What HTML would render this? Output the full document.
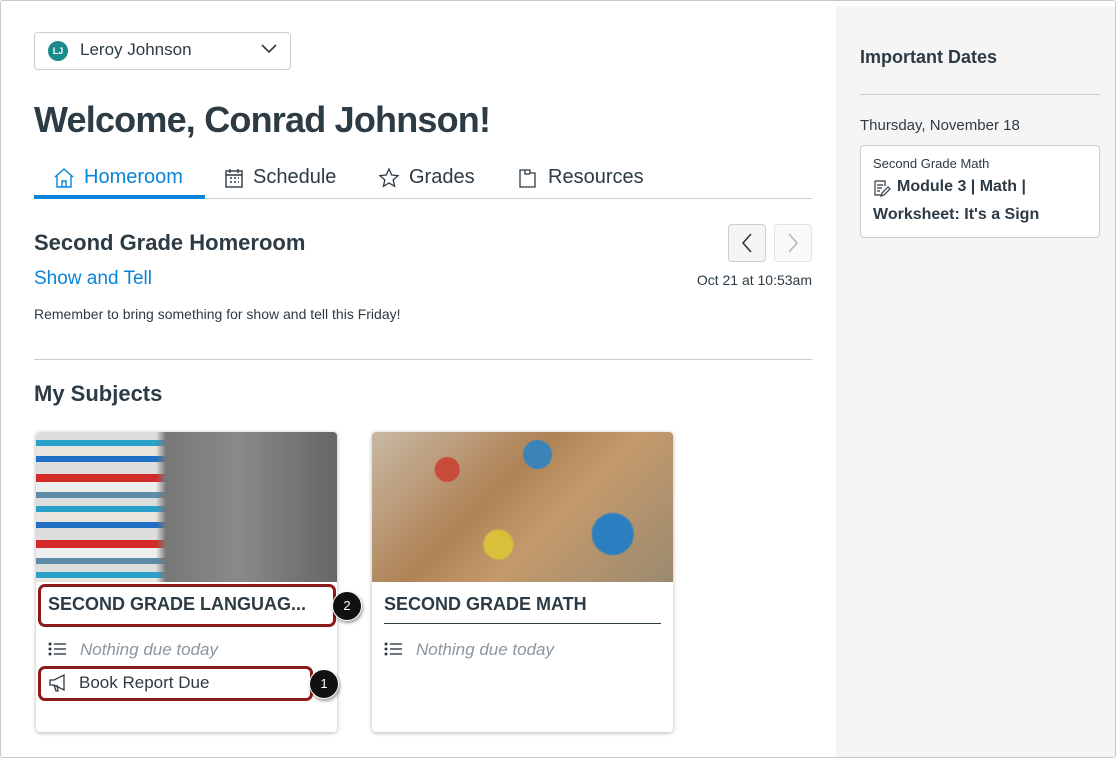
<!DOCTYPE html>
<html><head><style>
*{box-sizing:border-box;margin:0;padding:0}
body{width:1116px;height:758px;overflow:hidden;background:#fff;font-family:"Liberation Sans",sans-serif;color:#2d3b45;position:relative}
.frame{position:absolute;inset:0;border:1px solid #c8c8c8;border-radius:3px;pointer-events:none}
.side{position:absolute;left:836px;top:6px;width:279px;height:751px;background:#f5f5f5}
.abs{position:absolute}
.tab{position:absolute;top:166px;font-size:20px;display:flex;align-items:center;gap:9px}
.card{position:absolute;top:432px;width:301px;height:300px;background:#fff;border-radius:4px;box-shadow:0 1px 4px rgba(0,0,0,.3);overflow:hidden}
.badge{position:absolute;width:30px;height:30px;border-radius:50%;background:#111;color:#fff;font-size:13px;text-align:center;line-height:28px;box-shadow:1px 2px 3px rgba(0,0,0,.4);border:1px solid #fff}
.hl{position:absolute;border:3px solid #8b1a1a;border-radius:7px}
</style></head><body>
<div class="side"></div>
<div class="abs" style="left:34px;top:32px;width:257px;height:38px;border:1px solid #c7cdd1;border-radius:4px"></div>
<div class="abs" style="left:48px;top:41px;width:20px;height:20px;border-radius:50%;background:#1a8a8c;color:#fff;font-size:9px;font-weight:bold;text-align:center;line-height:20px">LJ</div>
<div class="abs" style="left:80px;top:40px;font-size:17px">Leroy Johnson</div>
<svg class="abs" style="left:261px;top:44px" width="16" height="10"><path d="M1 1l7 7 7-7" stroke="#2d3b45" stroke-width="1.6" fill="none"/></svg>
<div class="abs" style="left:34px;top:99px;font-size:36px;font-weight:bold;letter-spacing:-0.8px">Welcome, Conrad Johnson!</div>
<div class="abs" style="left:34px;top:198px;width:778px;height:1px;background:#c7cdd1"></div>
<div class="abs" style="left:34px;top:195px;width:171px;height:4px;background:#0a84d8"></div>
<div class="tab" style="left:53px;color:#0a84d8"><svg width="22" height="22" viewBox="0 0 22 22" fill="none" stroke="#0a84d8" stroke-width="1.4"><path d="M2 10L11 2l9 8M4 8v12h14V8M9 20v-6h4v6"/></svg>Homeroom</div>
<div class="tab" style="left:224px"><svg width="20" height="20" viewBox="0 0 20 20" fill="none" stroke="#2d3b45" stroke-width="1.4"><rect x="2" y="3" width="16" height="16"/><path d="M2 7h16M6 1v4M14 1v4M6 10h2M10 10h2M14 10h1M6 14h2M10 14h2M14 14h1"/></svg>Schedule</div>
<div class="tab" style="left:378px"><svg width="22" height="22" viewBox="0 0 22 22" fill="none" stroke="#2d3b45" stroke-width="1.3"><path d="M11 2l2.7 6 6.3.6-4.8 4.3 1.4 6.4L11 16l-5.6 3.3 1.4-6.4L2 8.6 8.3 8z"/></svg>Grades</div>
<div class="tab" style="left:517px"><svg width="22" height="22" viewBox="0 0 22 22" fill="none" stroke="#2d3b45" stroke-width="1.3"><path d="M3 3h10v3h5v14H3zM8 3v4h5"/></svg>Resources</div>
<div class="abs" style="left:34px;top:230px;font-size:22px;font-weight:bold">Second Grade Homeroom</div>
<div class="abs" style="left:728px;top:224px;width:38px;height:38px;border:1px solid #c7cdd1;border-radius:4px;background:#f5f5f5"></div>
<svg class="abs" style="left:740px;top:232px" width="14" height="22"><path d="M11 2L3 11l8 9" stroke="#2d3b45" stroke-width="1.6" fill="none"/></svg>
<div class="abs" style="left:774px;top:224px;width:38px;height:38px;border:1px solid #e0e4e6;border-radius:4px;background:#fafafa"></div>
<svg class="abs" style="left:786px;top:232px" width="14" height="22"><path d="M3 2l8 9-8 9" stroke="#b0b8bd" stroke-width="1.6" fill="none"/></svg>
<div class="abs" style="left:34px;top:268px;font-size:19px;color:#0a84d8">Show and Tell</div>
<div class="abs" style="left:612px;width:200px;text-align:right;top:272px;font-size:14px">Oct 21 at 10:53am</div>
<div class="abs" style="left:34px;top:306px;font-size:14px">Remember to bring something for show and tell this Friday!</div>
<div class="abs" style="left:34px;top:359px;width:778px;height:1px;background:#c7cdd1"></div>
<div class="abs" style="left:34px;top:381px;font-size:22px;font-weight:bold">My Subjects</div>

<div class="card" style="left:36px">
 <div style="height:150px;background:linear-gradient(90deg,rgba(0,0,0,0) 0,rgba(0,0,0,0) 120px,#777 130px,#8a8a8a 200px,#666 301px),repeating-linear-gradient(180deg,#ddd 0 8px,#2aa1c8 8px 14px,#e8e6df 14px 24px,#1f6fc4 24px 30px,#ddd 30px 42px,#d32a2a 42px 50px,#eee 50px 60px,#5c8ca8 60px 66px)"></div>
 <div style="position:absolute;left:12px;top:162px;font-size:18px;font-weight:bold">SECOND GRADE LANGUAG...</div>
 <svg style="position:absolute;left:12px;top:210px" width="18" height="14" fill="#2d3b45"><circle cx="2" cy="2" r="1.5"/><circle cx="2" cy="7" r="1.5"/><circle cx="2" cy="12" r="1.5"/><rect x="6" y="1.3" width="12" height="1.4"/><rect x="6" y="6.3" width="12" height="1.4"/><rect x="6" y="11.3" width="12" height="1.4"/></svg>
 <div style="position:absolute;left:44px;top:208px;font-size:17px;font-style:italic;color:#8b969e">Nothing due today</div>
 <svg style="position:absolute;left:12px;top:241px" width="20" height="20" fill="none" stroke="#2d3b45" stroke-width="1.3"><path d="M2 7h4l10-5v15L6 12H2zM6 12l2 6h2l-1-6"/></svg>
 <div style="position:absolute;left:43px;top:241px;font-size:17px">Book Report Due</div>
</div>
<div class="card" style="left:372px">
 <div style="height:150px;background:radial-gradient(circle at 25% 25%,#c94c3a 0 12px,transparent 13px),radial-gradient(circle at 55% 15%,#3a84b8 0 14px,transparent 15px),radial-gradient(circle at 80% 68%,#2b7ec0 0 20px,transparent 22px),radial-gradient(circle at 42% 75%,#d9c03a 0 14px,transparent 16px),linear-gradient(135deg,#c8b9a4,#b08356 40%,#c49a6c 60%,#9b8a70)"></div>
 <div style="position:absolute;left:12px;top:162px;font-size:18px;font-weight:bold">SECOND GRADE MATH</div>
 <div style="position:absolute;left:12px;top:191px;width:277px;height:1px;background:#2d3b45"></div>
 <svg style="position:absolute;left:12px;top:210px" width="18" height="14" fill="#2d3b45"><circle cx="2" cy="2" r="1.5"/><circle cx="2" cy="7" r="1.5"/><circle cx="2" cy="12" r="1.5"/><rect x="6" y="1.3" width="12" height="1.4"/><rect x="6" y="6.3" width="12" height="1.4"/><rect x="6" y="11.3" width="12" height="1.4"/></svg>
 <div style="position:absolute;left:44px;top:208px;font-size:17px;font-style:italic;color:#8b969e">Nothing due today</div>
</div>
<div class="hl" style="left:38px;top:584px;width:298px;height:43px"></div>
<div class="badge" style="left:332px;top:591px">2</div>
<div class="hl" style="left:38px;top:666px;width:275px;height:35px"></div>
<div class="badge" style="left:309px;top:669px">1</div>

<div class="abs" style="left:860px;top:47px;font-size:18px;font-weight:bold">Important Dates</div>
<div class="abs" style="left:860px;top:94px;width:240px;height:1px;background:#c7cdd1"></div>
<div class="abs" style="left:860px;top:117px;font-size:15px">Thursday, November 18</div>
<div class="abs" style="left:860px;top:145px;width:240px;height:93px;background:#fff;border:1px solid #c7cdd1;border-radius:4px"></div>
<div class="abs" style="left:873px;top:156px;font-size:13px">Second Grade Math</div>
<svg class="abs" style="left:873px;top:179px" width="18" height="18" fill="none" stroke="#2d3b45" stroke-width="1.2"><path d="M2 2h10v5M2 2v14h7M4 6h6M4 9h5M4 12h3M15 8l-6 6-1 3 3-1 6-6z"/></svg>
<div class="abs" style="left:873px;top:173px;font-size:16px;font-weight:bold;line-height:28px;text-indent:24px;width:220px">Module 3 | Math | Worksheet: It's a Sign</div>
<div class="frame"></div>
</body></html>
